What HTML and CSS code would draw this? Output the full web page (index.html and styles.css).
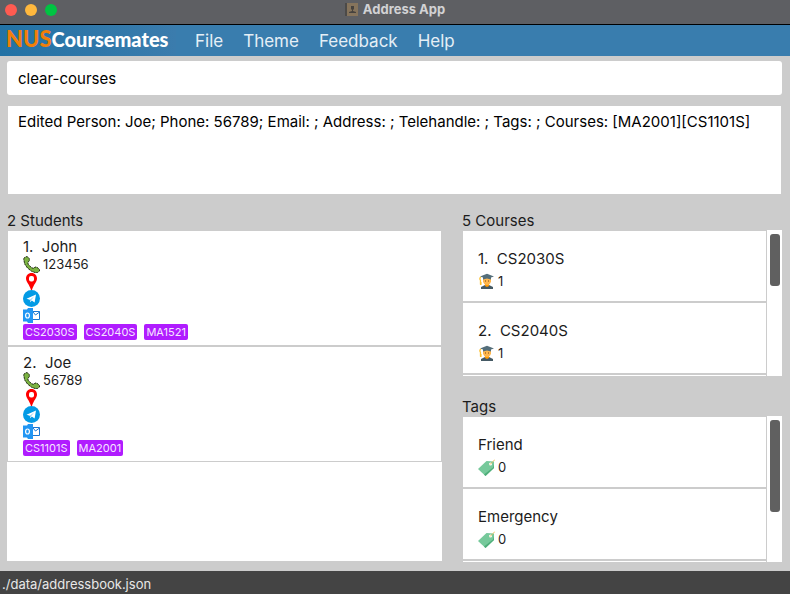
FILE: index.html
```
<!DOCTYPE html>
<html lang="en">
<head>
<meta charset="utf-8">
<title>Address App</title>
<link rel="stylesheet" href="styles.css">
</head>
<body>
<svg class="defs" aria-hidden="true">
  <symbol id="phone" viewBox="0 0 17 17"><path d="M.7 3 1.500 1.500 4 .5 6.300 2.500V5L4.800 6.300 5.200 8.300 8.600 11.800 10.800 12.300 12 11 14 11.300 16.500 13.500V15L14.500 16.500H12L8.500 15.200 4.500 12 1.700 8Z" fill="#7cb342" stroke="#142008" stroke-width=".9" stroke-dasharray="2.500 .6"/></symbol>
  <symbol id="pin" viewBox="0 0 17 17"><path fill="#f00" d="M8.500 0C5 0 3 2.500 3 5.500c0 3.500 3.500 6 5 11.500h1C10.500 11.500 14 9 14 5.500 14 2.500 12 0 8.500 0Z"/><rect x="6" y="3" width="5" height="5.500" rx="2" fill="#fff"/></symbol>
  <symbol id="telegram" viewBox="0 0 17 17"><circle cx="8.500" cy="8.500" r="8.500" fill="#039be5"/><path d="M3.500 8.700 13 4.600 11.600 12.500 8.800 10.600 7.300 12.200 6.800 9.800Z" fill="#fff"/><path d="m6.800 9.800 4.500-3.500-3.300 3.900-.7 2Z" fill="#8fd0f2"/></symbol>
  <symbol id="mail" viewBox="0 0 17 17"><path d="M9 4.500h7.500v8H9M10 5l2.500 3L16.500 5" fill="#fff" stroke="#1976d2"/><path d="M0 2.500H4L5 1h5v15H5L4 14.500H0Z" fill="#2196f3"/><ellipse cx="4.500" cy="8.500" rx="1.900" ry="2.500" fill="none" stroke="#fff" stroke-width="1.200"/></symbol>
  <symbol id="student" viewBox="0 0 17 17"><path d="M3 16v-2l4-2h4l4 2v2Z" fill="#455a64"/><path d="M7 10h4v3l-2 1-2-1Z" fill="#ff9800"/><path d="M5 5h8v3.500Q12 12 9 12T5 8.500Z" fill="#ffb74d"/><path d="m2 3.500 7-2.800 7 2.800-3 1v2l-4-1-4 1v-2Z" fill="#546e7a"/><path d="M3 4Q1 5 2.500 7.500v4" fill="none" stroke="#fdc02f" stroke-width="1.300"/><path d="M2 9h1.500v3H2Z" fill="#fdc02f"/><path d="M7 7.500h1v1H7Zm3 0h1v1h-1Z" fill="#784719"/></symbol>
  <symbol id="tag" viewBox="0 0 17 17"><path d="m0 10 8.500-8 7.500.5V9l-8.500 8Z" fill="#76c99b"/><path d="m7.500 17 8.500-8V5l-1 3.500-9 7Z" fill="#4fae7a"/><circle cx="12.500" cy="5" r="1.500" fill="#fff"/><path d="m12 5.500 5-5" stroke="#f5b94c" stroke-dasharray="2 .5"/></symbol>
</svg>
<div class="window">
  <header class="titlebar">
    <div class="lights"><i class="red"></i><i class="yellow"></i><i class="green"></i></div>
    <h1 class="title"><svg class="appicon" viewBox="0 0 13 13" aria-hidden="true"><path fill="#86745c" d="M1 0h12v13H1Z"/><path fill="#4c4a48" d="M0 0h2v13H0Z"/><path fill="#46423e" d="M6 3h3v3L8 7v1l3 1v1H4V9l3-1V7L6 6Z"/></svg>Address App</h1>
  </header>
  <nav class="menubar">
    <div class="brand"><span class="nus">NUS</span><span>Coursemates</span></div>
    <button>File</button><button>Theme</button><button>Feedback</button><button>Help</button>
  </nav>
  <main class="content">
    <input class="command" type="text" aria-label="Command" value="clear-courses">
    <textarea class="result" aria-label="Result" readonly>Edited Person: Joe; Phone: 56789; Email: ; Address: ; Telehandle: ; Tags: ; Courses: [MA2001][CS1101S]</textarea>
    <div class="columns">
      <section class="students">
        <h2>2 Students</h2>
        <ul class="list">
          <li class="person">
            <h3>1.&nbsp; John</h3>
            <p><svg><use href="#phone"/></svg>123456</p>
            <p><svg><use href="#pin"/></svg></p>
            <p><svg><use href="#telegram"/></svg></p>
            <p><svg><use href="#mail"/></svg></p>
            <div class="chips"><span>CS2030S</span><span>CS2040S</span><span>MA1521</span></div>
          </li>
          <li class="person">
            <h3>2.&nbsp; Joe</h3>
            <p><svg><use href="#phone"/></svg>56789</p>
            <p><svg><use href="#pin"/></svg></p>
            <p><svg><use href="#telegram"/></svg></p>
            <p><svg><use href="#mail"/></svg></p>
            <div class="chips"><span>CS1101S</span><span>MA2001</span></div>
          </li>
        </ul>
      </section>
      <div class="side">
        <section class="group">
          <h2>5 Courses</h2>
          <div class="scroller">
            <ul class="list">
              <li class="item"><h3>1.&nbsp; CS2030S</h3><p><svg><use href="#student"/></svg>1</p></li>
              <li class="item"><h3>2.&nbsp; CS2040S</h3><p><svg><use href="#student"/></svg>1</p></li>
              <li class="item"></li>
            </ul>
            <div class="track"><div class="thumb short"></div></div>
          </div>
        </section>
        <section class="group">
          <h2>Tags</h2>
          <div class="scroller">
            <ul class="list">
              <li class="item"><h3>Friend</h3><p><svg><use href="#tag"/></svg>0</p></li>
              <li class="item"><h3>Emergency</h3><p><svg><use href="#tag"/></svg>0</p></li>
              <li class="item"></li>
            </ul>
            <div class="track"><div class="thumb long"></div></div>
          </div>
        </section>
      </div>
    </div>
  </main>
  <footer class="status">./data/addressbook.json</footer>
</div>
</body>
</html>
```
FILE: styles.css
```
* { box-sizing: border-box; margin: 0; padding: 0; }
body { font: 15px/18px Inter, "Liberation Sans", sans-serif; color: #1c1c1c; background: #ccc; }
h2, h3 { font-size: 15px; font-weight: 400; }
ul { list-style: none; }
.defs { display: none; }
.window { display: flex; flex-direction: column; height: 100vh; }
.titlebar { display: grid; grid-template-columns: 1fr auto 1fr; height: 25px; background: #5e5f63; border-bottom: 1px solid #000; }
.lights { display: flex; gap: 8px; padding: 4px 5px; }
.lights i { width: 12px; height: 12px; border-radius: 50%; }
.red { background: #ff5b51; }
.yellow { background: #ffb83d; }
.green { background: #00c442; }
.title { display: flex; gap: 5px; align-items: center; height: 19px; font: 700 13px/19px Inter, sans-serif; color: #d2d2d4; }
.appicon { width: 13px; height: 13px; }
.menubar { display: flex; height: 31px; background: #397dae; }
.brand { display: flex; align-items: baseline; width: 176px; padding-left: 6px; color: #fff; background: linear-gradient(90deg, #2272a5, #3b7cad); font: 900 20px/27px Lato, sans-serif; }
.nus { color: #f07f09; font-size: 22px; }
.menubar button { border: 0; background: none; color: #e5eff6; font: 17px/30px Inter, sans-serif; padding: 0 1px 0 19px; }
.content { flex: 1; display: flex; flex-direction: column; min-height: 0; padding: 5px 8px 9px 7px; }
.command { height: 34px; border: 0; border-radius: 3px; background: #fff; padding: 0 11px; font: inherit; color: #000; }
.result { display: block; height: 88px; margin: 11px 1px 18px; padding: 7px 10px; border: 0; resize: none; background: #fff; font: inherit; color: #000; overflow: hidden; }
.columns { flex: 1; display: grid; grid-template-columns: 435fr 320fr; gap: 20px; min-height: 0; }
.students, .side, .group { display: flex; flex-direction: column; min-height: 0; }
.students { padding-bottom: 1px; }
.students .list { flex: 1; background: #fff; }
.person { border: 1px solid #ccc; padding: 7px 15px 4px; height: 116px; }
.person h3 { height: 18px; }
.person p { height: 17px; }
.person p, .item p { display: flex; gap: 3px; align-items: center; font-size: 13px; line-height: 17px; }
p svg { width: 17px; height: 17px; flex: none; }
.chips { display: flex; gap: 7px; }
.chips span { padding: 0 2px; border-radius: 2px; background: #b01cff; color: #f6e6ff; font-size: 11px; line-height: 16px; }
.side { gap: 22px; }
.group { flex: 1; }
.scroller { flex: 1; display: flex; min-height: 0; overflow: hidden; }
.scroller .list { flex: 1; overflow: hidden; background: #fff; }
.item { height: 72px; border: 1px solid #ccc; padding: 19px 15px; }
.item p { margin-top: 5px; }
.track { width: 15px; background: #fff; padding: 4px 2px 4px 3px; }
.thumb { border-radius: 3px; background: #606060; }
.short { height: 38%; }
.long { height: 67%; }
.status { height: 23px; padding-left: 2px; background: #444; color: #e8e8e8; font-size: 13px; line-height: 26px; }
```
